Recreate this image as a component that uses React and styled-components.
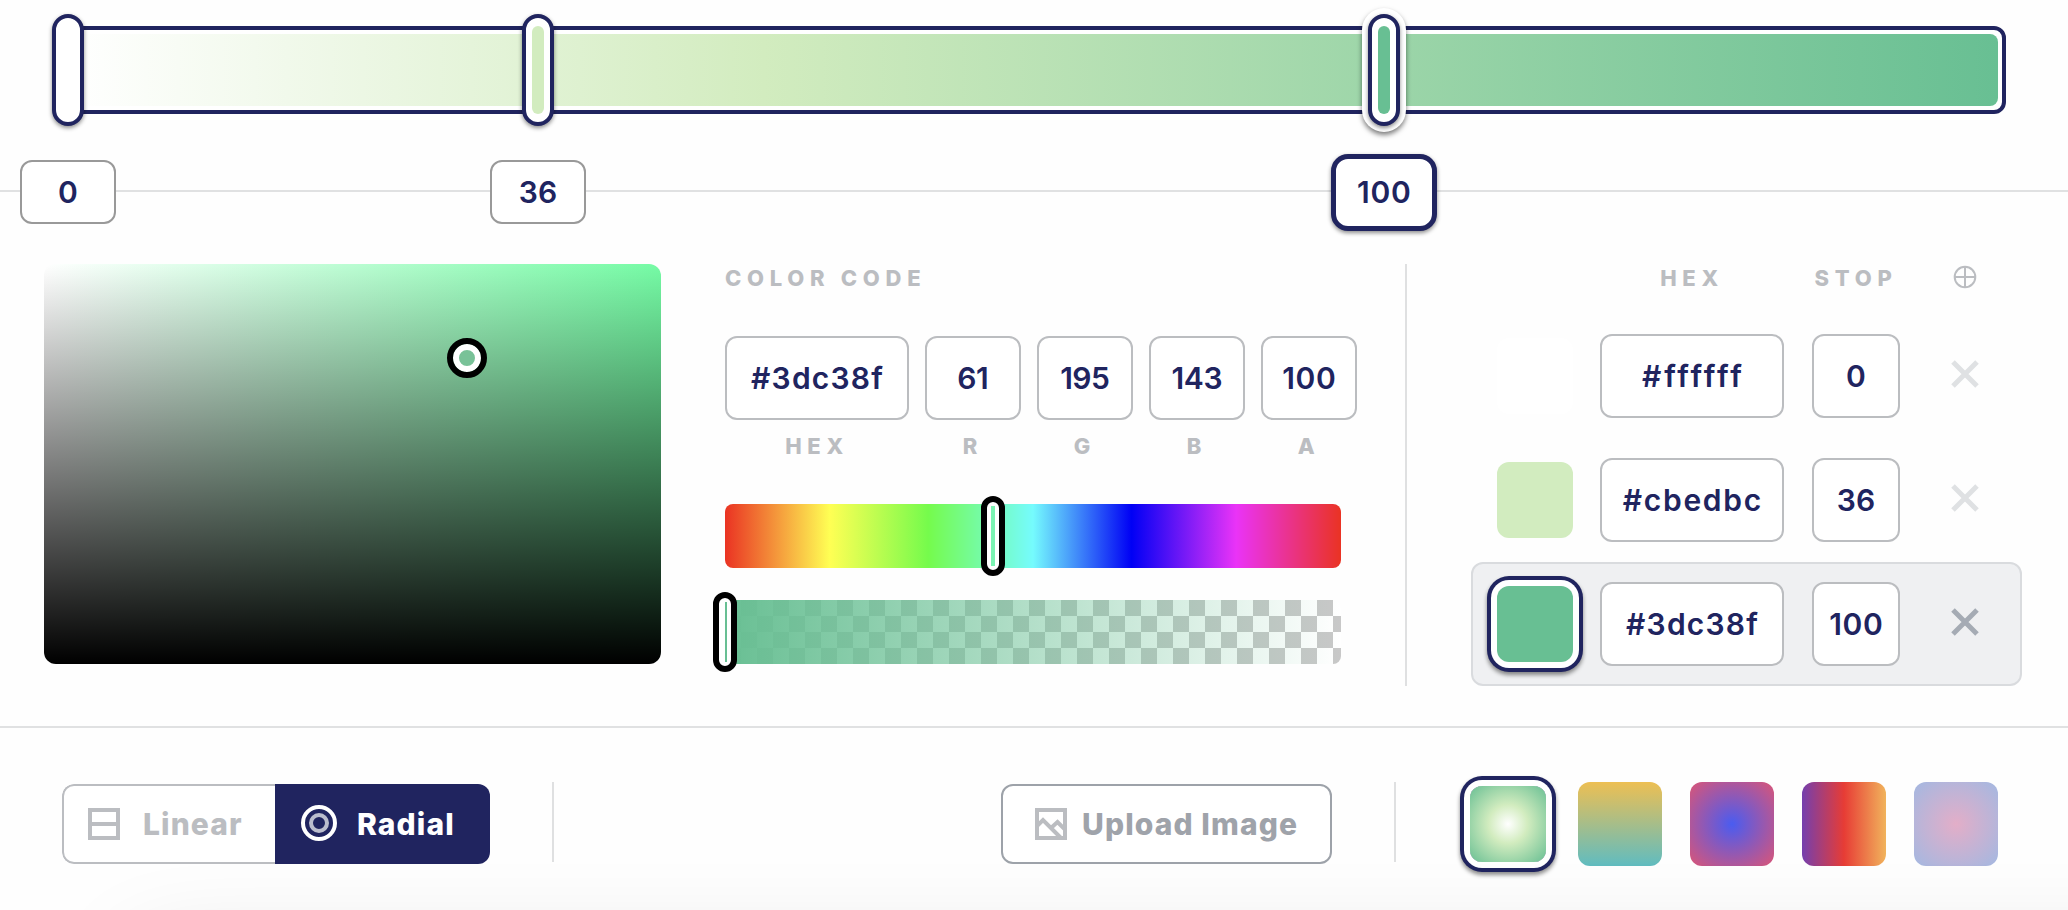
import React from "react";
import styled, { createGlobalStyle, css } from "styled-components";

const navy = "#20245f";
const mint = "#68bf93";

const GlobalStyle = createGlobalStyle`
  * { box-sizing: border-box; }
  body { margin: 0; background: #fefefe; }
`;

const Page = styled.div`
  position: relative;
  width: 2068px;
  height: 910px;
  overflow: hidden;
  background: #fefefe;
  color: ${navy};
  font-family: Inter, "Liberation Sans", sans-serif;
  display: flex;
  flex-direction: column;
`;

const TrackSection = styled.section`
  flex: none;
  height: 192px;
  padding: 26px 62px 0;
  border-bottom: 2px solid #e0e1e2;
`;

const Track = styled.div`
  position: relative;
  height: 88px;
  padding: 4px;
  border: 4px solid ${navy};
  border-radius: 12px;
  background: #fff;
`;

const TrackFill = styled.div`
  height: 72px;
  border-radius: 8px;
  background: linear-gradient(90deg, #fff 0%, #d2ecbf 36%, ${mint} 100%);
`;

const Stop = styled.div`
  position: absolute;
  top: -16px;
  left: ${(p) => p.$x - 82}px;
  width: 32px;
  height: 112px;
  padding: 8px 6px;
  border: 4px solid ${navy};
  border-radius: 16px;
  background: #fff;
  box-shadow: ${(p) =>
    p.$active
      ? "0 2px 4px rgba(0,0,0,.45), 0 0 0 6px #fff, 0 3px 5px 6px rgba(0,0,0,.5)"
      : "0 2px 4px rgba(0,0,0,.45)"};
`;

const StopColor = styled.div`
  height: 88px;
  border-radius: 6px;
  background: ${(p) => p.$color};
`;

const Badge = styled.div`
  position: absolute;
  top: ${(p) => (p.$active ? 153.5 : 160)}px;
  left: ${(p) => p.$x - (p.$active ? 52.8 : 48)}px;
  width: ${(p) => (p.$active ? 105.6 : 96)}px;
  height: ${(p) => (p.$active ? 77 : 64)}px;
  display: flex;
  align-items: center;
  justify-content: center;
  border: ${(p) => (p.$active ? `5px solid ${navy}` : "2px solid #999")};
  border-radius: ${(p) => (p.$active ? 17 : 12)}px;
  background: #fff;
  box-shadow: ${(p) => (p.$active ? "0 2px 4px rgba(0,0,0,.45)" : "none")};
  font-size: 30px;
  font-weight: 600;
  letter-spacing: ${(p) => p.$ls || 0}px;
  text-indent: ${(p) => p.$ls || 0}px;
`;

const Main = styled.section`
  flex: none;
  height: 536px;
  padding: 72px 46px 0 44px;
  display: flex;
  border-bottom: 2px solid #e0e1e2;
`;

const Saturation = styled.div`
  position: relative;
  width: 617px;
  height: 400px;
  border-radius: 12px;
  background: linear-gradient(0deg, #000, transparent),
    linear-gradient(90deg, #fff, #75fba5);
`;

const Cursor = styled.div`
  position: absolute;
  left: 403px;
  top: 74px;
  width: 40px;
  height: 40px;
  border-radius: 50%;
  border: 6px solid #000;
  background: #79c298;
  box-shadow: inset 0 0 0 6px #fff;
`;

const CodePanel = styled.div`
  width: 632px;
  margin-left: 64px;
`;

const Caption = styled.div`
  height: 28px;
  line-height: 28px;
  font-size: 22px;
  font-weight: 800;
  letter-spacing: 5.7px;
  color: #bbbdc1;
  white-space: nowrap;
  text-align: ${(p) => p.$align || "left"};
`;

const Fields = styled.div`
  display: flex;
  gap: 16px;
  margin-top: 44px;
`;

const Field = styled.div`
  width: ${(p) => p.$w}px;
  display: flex;
  flex-direction: column;
  gap: 12px;
`;

const Input = styled.div`
  flex: none;
  width: ${(p) => p.$w}px;
  height: 84px;
  display: flex;
  align-items: center;
  justify-content: center;
  border: 2px solid #bbbdc0;
  border-radius: 12px;
  background: #fff;
  font-size: 30px;
  font-weight: 600;
  letter-spacing: ${(p) => p.$ls || 0}px;
  text-indent: ${(p) => p.$ls || 0}px;
`;

const Slider = styled.div`
  position: relative;
  width: 616px;
  height: 64px;
  margin-top: ${(p) => p.$mt}px;
  border-radius: 8px;
  background: ${(p) => p.$bg};
`;

const SliderHandle = styled.div`
  position: absolute;
  top: -8px;
  left: ${(p) => p.$x}px;
  width: 24px;
  height: 80px;
  padding: 4px;
  border: 6px solid #000;
  border-radius: 12px;
  background: #fff;
`;

const SliderValue = styled.div`
  height: 60px;
  background: ${(p) => p.$bg};
`;

const StopsPanel = styled.div`
  flex: none;
  width: 617px;
  height: 422px;
  margin-left: 48px;
  padding-left: 64px;
  border-left: 2px solid #dfe0e1;
`;

const StopsHeader = styled.div`
  display: grid;
  grid-template-columns: 76px 184px 88px 50px;
  column-gap: 28px;
  padding-left: 25px;
  height: 50px;
`;

const StopRow = styled.div`
  display: flex;
  align-items: center;
  height: 124px;
  padding-left: 24px;
  border: 2px solid ${(p) => (p.$active ? "#d9dbde" : "transparent")};
  border-radius: 12px;
  background: ${(p) => (p.$active ? "#eff0f2" : "transparent")};
`;

const Swatch = styled.div`
  flex: none;
  width: ${(p) => p.$size}px;
  height: ${(p) => p.$size}px;
  margin: ${(p) => p.$inset || 0}px;
  border-radius: 12px;
  background: ${(p) => p.$bg};
  ${(p) =>
    p.$active &&
    css`
      box-shadow: 0 0 0 6px #fff, 0 0 0 10px ${navy},
        0 3px 4px 10px rgba(0, 0, 0, 0.45);
    `}
`;

const RowInputs = styled.div`
  display: flex;
  gap: 28px;
  margin-left: 27px;
`;

const RemoveIcon = styled.svg`
  margin: -4px 0 0 51px;
`;

const AddIcon = styled.svg`
  margin: 1px 0 0 25px;
`;

const Footer = styled.footer`
  position: relative;
  height: 182px;
  padding: 54px 70px 0 62px;
  display: flex;
  align-items: flex-start;
`;

const Toggle = styled.div`
  display: flex;
  width: 428px;
  height: 80px;
  margin-top: 2px;
  border-radius: 12px;
  overflow: hidden;
`;

const buttonType = css`
  font-size: 30px;
  font-weight: 800;
  letter-spacing: 1.1px;
`;

const ToggleItem = styled.div`
  display: flex;
  align-items: center;
  width: ${(p) => (p.$active ? 215 : 213)}px;
  padding-left: 24px;
  background: ${(p) => (p.$active ? navy : "#fff")};
  color: ${(p) => (p.$active ? "#fff" : "#bbbdc1")};
  ${buttonType}
  ${(p) =>
    !p.$active &&
    css`
      border: 2px solid #bbbdc1;
      border-right: 0;
      border-radius: 12px 0 0 12px;
    `}
`;

const ButtonText = styled.span`
  margin-left: ${(p) => p.$gap}px;
  white-space: nowrap;
`;

const Divider = styled.div`
  width: 2px;
  height: 80px;
  margin-left: 62px;
  background: #dfe0e1;
`;

const UploadButton = styled.div`
  display: flex;
  align-items: center;
  width: 331px;
  height: 80px;
  margin: 2px 0 0 auto;
  padding-left: 32px;
  border: 2px solid #9da2a9;
  border-radius: 12px;
  background: #fff;
  color: #9fa3aa;
  ${buttonType}
`;

const Presets = styled.div`
  display: flex;
  gap: 28px;
  margin-left: 70px;
`;

const BottomShade = styled.div`
  position: absolute;
  left: 145px;
  right: -150px;
  top: 965px;
  height: 100px;
  box-shadow: 0 0 100px 10px rgba(0, 0, 0, 0.14);
`;

const fields = [
  { label: "HEX", value: "#3dc38f", width: 184, ls: 1.2 },
  { label: "R", value: "61", width: 96, ls: -0.5 },
  { label: "G", value: "195", width: 96, ls: -0.5 },
  { label: "B", value: "143", width: 96, ls: -0.3 },
  { label: "A", value: "100", width: 96, ls: 0.6 },
];

const stops = [
  { hex: "#ffffff", stop: "0", color: "#fff", ls: 2.8 },
  { hex: "#cbedbc", stop: "36", color: "#d2ecbf", ls: 1.7 },
  { hex: "#3dc38f", stop: "100", color: mint, ls: 1.2, stopLs: 0.6, active: true },
];

const presets = [
  "radial-gradient(circle at center, #fff 0%, #d2ecbf 36%, #68bf93 100%)",
  "linear-gradient(180deg, #edbf53, #60bcc0)",
  "radial-gradient(circle at center, #4a5cf0, #db5576)",
  "linear-gradient(90deg, #743fae, #e73c35 50%, #f1b35c)",
  "radial-gradient(circle at center, #e3aec8, #a3b8e1)",
];

const Remove = ({ color }) => (
  <RemoveIcon width="28" height="28" viewBox="0 0 28 28">
    <path d="M2 2L26 26M26 2L2 26" stroke={color} strokeWidth="5" />
  </RemoveIcon>
);

const hue =
  "linear-gradient(90deg, #ea3323 0%, #ffff54 17%, #75fb4c 33%, #75fbfd 50%, #0000f5 66%, #ea33f7 83%, #ea3323 100%)";
const alpha =
  "linear-gradient(90deg, #68bf93, rgba(104,191,147,0)), repeating-conic-gradient(#c8c8c8 0 25%, #fff 0 50%) 0 0 / 32px 32px";

export default function App() {
  return (
    <Page>
      <GlobalStyle />
      <TrackSection>
        <Track>
          <TrackFill />
          <Stop $x={68}><StopColor $color="#fff" /></Stop>
          <Stop $x={538}><StopColor $color="#d2ecbf" /></Stop>
          <Stop $x={1384} $active><StopColor $color={mint} /></Stop>
        </Track>
        <Badge $x={68}>0</Badge>
        <Badge $x={538}>36</Badge>
        <Badge $x={1384} $active $ls={0.8}>100</Badge>
      </TrackSection>

      <Main>
        <Saturation><Cursor /></Saturation>
        <CodePanel>
          <Caption>COLOR CODE</Caption>
          <Fields>
            {fields.map((f) => (
              <Field key={f.label} $w={f.width}>
                <Input $w={f.width} $ls={f.ls}>{f.value}</Input>
                <Caption $align="center">{f.label}</Caption>
              </Field>
            ))}
          </Fields>
          <Slider $mt={44} $bg={hue}>
            <SliderHandle $x={256}><SliderValue $bg="#7bf3b2" /></SliderHandle>
          </Slider>
          <Slider $mt={32} $bg={alpha}>
            <SliderHandle $x={-12}>
              <SliderValue $bg="linear-gradient(90deg, #fff 50%, #68bf93 50%)" />
            </SliderHandle>
          </Slider>
        </CodePanel>
        <StopsPanel>
          <StopsHeader>
            <span />
            <Caption $align="center">HEX</Caption>
            <Caption $align="center">STOP</Caption>
            <AddIcon width="24" height="24" viewBox="0 0 24 24" fill="none" stroke="#bbbdc1" strokeWidth="2">
              <circle cx="12" cy="12" r="10.3" />
              <path d="M12 2V22M2 12H22" />
            </AddIcon>
          </StopsHeader>
          {stops.map((s) => (
            <StopRow key={s.hex} $active={s.active}>
              <Swatch $size={76} $bg={s.color} $active={s.active} />
              <RowInputs>
                <Input $w={184} $ls={s.ls}>{s.hex}</Input>
                <Input $w={88} $ls={s.stopLs}>{s.stop}</Input>
              </RowInputs>
              <Remove color={s.active ? "#a5abb4" : "#dfe1e3"} />
            </StopRow>
          ))}
        </StopsPanel>
      </Main>

      <Footer>
        <Toggle>
          <ToggleItem>
            <svg width="32" height="32" fill="none" stroke="#bbbdc1" strokeWidth="4">
              <path d="M2 2H30V30H2ZM2 16H30" />
            </svg>
            <ButtonText $gap={23}>Linear</ButtonText>
          </ToggleItem>
          <ToggleItem $active>
            <svg width="40" height="40" fill="none" strokeWidth="4">
              <circle cx="20" cy="19" r="16" stroke="#fff" />
              <circle cx="20" cy="19" r="8" stroke="#bbbdcd" />
            </svg>
            <ButtonText $gap={18}>Radial</ButtonText>
          </ToggleItem>
        </Toggle>
        <Divider />
        <UploadButton>
          <svg width="32" height="32" fill="none" stroke="#bbbdc1" strokeWidth="4">
            <path d="M2 2H30V30H2Z" />
            <path d="M2 18L8 12L26 30M16 20L22.500 14L30 21.500" />
          </svg>
          <ButtonText $gap={15}>Upload Image</ButtonText>
        </UploadButton>
        <Divider />
        <Presets>
          {presets.map((bg, i) => (
            <Swatch key={bg} $bg={bg} $active={i === 0} $size={i === 0 ? 76 : 84} $inset={i === 0 ? 4 : 0} />
          ))}
        </Presets>
      </Footer>
      <BottomShade />
    </Page>
  );
}
